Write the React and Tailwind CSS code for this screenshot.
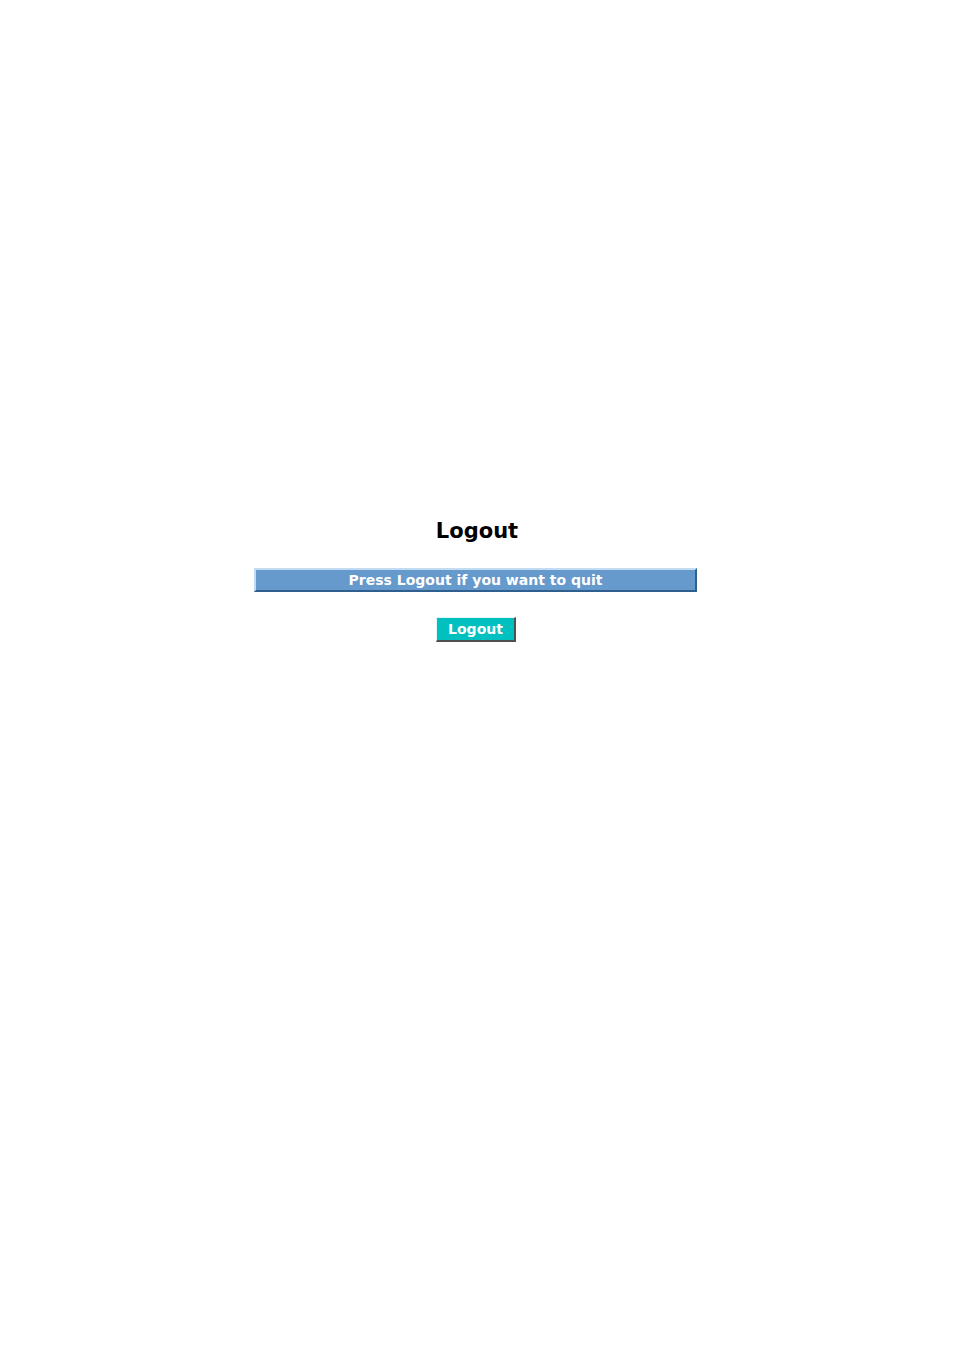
export default function App() {
  return (
    <div className="min-h-[1351px] w-full bg-white" style={{ fontFamily: '"DejaVu Sans", Verdana, sans-serif' }}>
      <div className="flex flex-col items-center pt-[517px]">
        {/* Title */}
        <h1 className="text-[21px] font-bold leading-[28px] text-black">Logout</h1>

        {/* Info bar */}
        <div className="mt-[23px] mr-[3px] w-[443px] h-[24px] flex items-center justify-center bg-[#6699cc] border-t-2 border-l-2 border-b-2 border-r-2 border-t-[#c4dcf2] border-l-[#c4dcf2] border-b-[#2f5f8f] border-r-[#2f5f8f]">
          <span className="text-[14px] font-bold text-white leading-none">Press Logout if you want to quit</span>
        </div>

        {/* Button */}
        <button className="mt-[25px] mr-[2px] w-[80px] h-[25px] flex items-center justify-center bg-[#00c0c0] border-t border-l border-b-2 border-r-2 border-t-[#e0f8f8] border-l-[#e0f8f8] border-b-[#505050] border-r-[#505050] text-[14px] font-bold text-white leading-none">
          Logout
        </button>
      </div>
    </div>
  );
}
